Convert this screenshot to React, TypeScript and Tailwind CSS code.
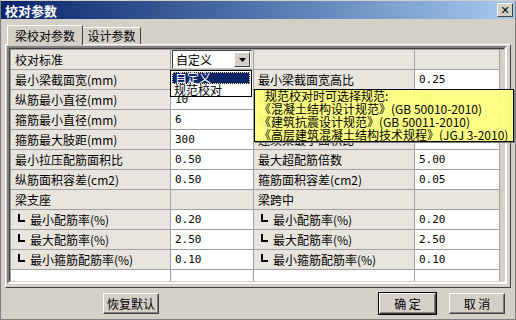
import React from 'react';

type Row = {
    a: string;
    b?: string;
    c: string;
    d?: string;
    sub?: boolean;
    group?: boolean;
};

const ROWS: Row[] = [
    { a: '最小梁截面宽(mm)', c: '最小梁截面宽高比', d: '0.25' },
    { a: '纵筋最小直径(mm)', b: '10', c: '纵筋最大直径(mm)', d: '20' },
    { a: '箍筋最小直径(mm)', b: '6', c: '箍筋最大间距(mm)', d: '200' },
    { a: '箍筋最大肢距(mm)', b: '300', c: '连续梁最小面积比', d: '0.25' },
    { a: '最小拉压配筋面积比', b: '0.50', c: '最大超配筋倍数', d: '5.00' },
    { a: '纵筋面积容差(cm2)', b: '0.50', c: '箍筋面积容差(cm2)', d: '0.05' },
    { a: '梁支座', c: '梁跨中', group: true },
    { a: '最小配筋率(%)', b: '0.20', c: '最小配筋率(%)', d: '0.20', sub: true },
    { a: '最大配筋率(%)', b: '2.50', c: '最大配筋率(%)', d: '2.50', sub: true },
    { a: '最小箍筋配筋率(%)', b: '0.10', c: '最小箍筋配筋率(%)', d: '0.10', sub: true },
];

const Corner = () => (
    <span className="mr-[5px] ml-[7px] mb-[3px] inline-block h-[8px] w-[7px] border-b-2 border-l-2 border-black" />
);

const Label: React.FC<{ text: string; sub?: boolean; w: string; pl: string }> = ({ text, sub, w, pl }) => (
    <div className={`flex h-[20px] ${w} items-center border-r border-b border-[#a0a0a0] bg-[#e8e5de] ${sub ? '' : pl}`}>
        {sub && <Corner />}
        <span>{text}</span>
    </div>
);

const Value: React.FC<{ text?: string; w: string; gray?: boolean }> = ({ text, w, gray }) => (
    <div
        className={`flex h-[20px] ${w} items-center border-r border-b border-[#a0a0a0] pl-[4px] font-['DejaVu_Sans_Mono',monospace] text-[11px] ${gray ? 'bg-[#e8e5de]' : 'bg-white'}`}
    >
        {text}
    </div>
);

const Button: React.FC<{ label: string; w: string; primary?: boolean }> = ({ label, w, primary }) => (
    <div className={primary ? 'border border-black' : 'border border-transparent'}>
        <div className={`flex h-[21px] ${w} items-center justify-center border border-t-white border-l-white border-r-[#404040] border-b-[#404040] bg-[#d4d0c8] shadow-[inset_-1px_-1px_0_#808080]`}>
            {label}
        </div>
    </div>
);

export default function App() {
    return (
        <div className="relative flex h-[320px] w-[516px] flex-col overflow-hidden border border-[#808080] border-t-[#d4d0c8] bg-[#d4d0c8] font-['Noto_Sans_CJK_SC',sans-serif] text-[12px] leading-none text-black">
            {/* title bar */}
            <div className="flex h-[18px] items-center justify-between bg-linear-to-r from-[#0a246a] to-[#a6caf0] pr-[2px] pl-[4px]">
                <span className="text-[13px] font-bold text-white">校对参数</span>
                <div className="flex h-[14px] w-[16px] items-center justify-center border border-t-white border-l-white border-r-[#404040] border-b-[#404040] bg-[#d4d0c8] text-[11px] font-bold font-['DejaVu_Sans',sans-serif]">
                    ✕
                </div>
            </div>

            {/* tabs */}
            <div className="mt-[6px] flex items-end pl-[6px]">
                <div className="relative z-10 -mb-px flex h-[20px] w-[76px] items-center justify-center border-t border-l border-r border-t-white border-l-white border-r-[#404040] bg-[#d4d0c8]">
                    梁校对参数
                </div>
                <div className="flex h-[17px] w-[58px] items-center justify-center border-t border-r border-t-white border-r-[#404040]">
                    设计参数
                </div>
            </div>

            {/* panel */}
            <div className="mx-[4px] h-[244px] border border-t-white border-l-white border-r-[#404040] border-b-[#404040] p-px">
                <div className="h-[238px] w-[500px] border-2 border-t-[#808080] border-l-[#808080] border-r-white border-b-white">
                    <div className="h-full border border-t-[#404040] border-l-[#404040] border-r-[#d4d0c8] border-b-[#d4d0c8] bg-[#d4d0c8]">
                        <div className="border-t border-l border-[#a0a0a0]">
                            {/* row 0 */}
                            <div className="flex">
                                <Label text="校对标准" w="w-[160px]" pl="pl-[4px]" />
                                <div className="flex h-[20px] w-[83px] items-center border-r border-b border-[#a0a0a0] bg-[#e8e5de] pl-px">
                                    <div className="flex h-[19px] w-[80px] items-center justify-between border border-t-[#404040] border-l-[#404040] border-r-[#d4d0c8] border-b-[#d4d0c8] bg-white pl-[3px] pr-px">
                                        <span>自定义</span>
                                        <div className="flex h-[15px] w-[16px] items-center justify-center border border-t-white border-l-white border-r-[#404040] border-b-[#404040] bg-[#d4d0c8]">
                                            <svg width="7" height="4" viewBox="0 0 7 4">
                                                <path d="M0 0h7L3.5 4z" fill="#000" />
                                            </svg>
                                        </div>
                                    </div>
                                </div>
                                <Label text="" w="w-[161px]" pl="pl-[5px]" />
                                <Value w="w-[85px]" gray />
                            </div>
                            {ROWS.map((r) => (
                                <div key={r.a + r.c} className="flex">
                                    <Label text={r.a} sub={r.sub} w="w-[160px]" pl="pl-[4px]" />
                                    <Value text={r.b} w="w-[83px]" gray={r.group} />
                                    <Label text={r.c} sub={r.sub} w="w-[161px]" pl="pl-[4px]" />
                                    <Value text={r.d} w="w-[85px]" gray={r.group} />
                                </div>
                            ))}
                            <div className="flex h-[11px]">
                                <div className="w-[160px] border-r border-[#a0a0a0] bg-white" />
                                <div className="w-[83px] border-r border-[#a0a0a0] bg-white" />
                                <div className="w-[161px] border-r border-[#a0a0a0] bg-white" />
                                <div className="w-[85px] border-r border-[#a0a0a0] bg-white" />
                            </div>
                        </div>
                    </div>
                </div>
            </div>

            {/* buttons */}
            <div className="mt-[4px] flex items-center">
                <div className="ml-[101px]">
                    <Button label="恢复默认" w="w-[56px]" />
                </div>
                <div className="ml-[218px]">
                    <Button label="确 定" w="w-[57px]" primary />
                </div>
                <div className="ml-[11px]">
                    <Button label="取 消" w="w-[56px]" />
                </div>
            </div>

            {/* open combobox list */}
            <div className="absolute top-[69px] left-[169px] flex h-[27px] w-[82px] flex-col border border-black bg-white py-px">
                <div className="mx-px flex h-[12px] items-center border border-dotted border-[#ffe08a] bg-[#0a246a] pl-[2px] text-white">
                    自定义
                </div>
                <div className="flex h-[12px] items-center pl-[3px]">规范校对</div>
            </div>

            {/* tooltip */}
            <div className="absolute top-[88px] left-[253px] flex h-[53px] w-[260px] flex-col justify-center gap-[1px] border border-black bg-[#ffff80]/95 pl-[4px] leading-[12px] shadow-[1px_1px_0_#808080]">
                <div className="pl-[6px]">规范校对时可选择规范:</div>
                <div>《混凝土结构设计规范》(GB 50010-2010)</div>
                <div>《建筑抗震设计规范》(GB 50011-2010)</div>
                <div>《高层建筑混凝土结构技术规程》(JGJ 3-2010)</div>
            </div>
        </div>
    );
}
